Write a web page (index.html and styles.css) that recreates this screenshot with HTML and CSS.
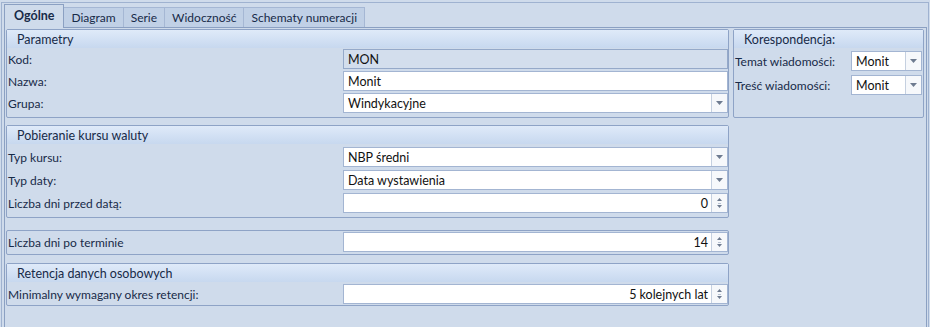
FILE: index.html
```html
<!DOCTYPE html>
<html lang="pl">
<head>
    <meta charset="UTF-8">
    <title>Monit</title>
    <link rel="stylesheet" href="styles.css">
</head>
<body>

    <div class="frame">

        <div class="tabs">
            <div class="tab active">Ogólne</div>
            <div class="tab">Diagram</div>
            <div class="tab">Serie</div>
            <div class="tab">Widoczność</div>
            <div class="tab">Schematy numeracji</div>
        </div>

        <div class="page">
            <div class="leftcol">

                <div class="group params">
                    <div class="groupheader">Parametry</div>
                    <div class="groupbody">
                        <div class="row">
                            <span class="label">Kod:</span>
                            <div class="field disabled">MON</div>
                        </div>
                        <div class="row">
                            <span class="label">Nazwa:</span>
                            <div class="field">Monit</div>
                        </div>
                        <div class="row">
                            <span class="label">Grupa:</span>
                            <div class="field combo">
                                <span class="value">Windykacyjne</span>
                                <span class="dropbtn"><svg width="7" height="4" viewBox="0 0 7 4"><polygon points="0,0 7,0 3.5,4" fill="#6e7b90"/></svg></span>
                            </div>
                        </div>
                    </div>
                </div>

                <div class="group rate">
                    <div class="groupheader">Pobieranie kursu waluty</div>
                    <div class="groupbody">
                        <div class="row">
                            <span class="label">Typ kursu:</span>
                            <div class="field combo">
                                <span class="value">NBP średni</span>
                                <span class="dropbtn"><svg width="7" height="4" viewBox="0 0 7 4"><polygon points="0,0 7,0 3.5,4" fill="#6e7b90"/></svg></span>
                            </div>
                        </div>
                        <div class="row">
                            <span class="label">Typ daty:</span>
                            <div class="field combo">
                                <span class="value">Data wystawienia</span>
                                <span class="dropbtn"><svg width="7" height="4" viewBox="0 0 7 4"><polygon points="0,0 7,0 3.5,4" fill="#6e7b90"/></svg></span>
                            </div>
                        </div>
                        <div class="row">
                            <span class="label">Liczba dni przed datą:</span>
                            <div class="field spin">
                                <span class="value">0</span>
                                <span class="spinbtn"><svg width="7" height="12" viewBox="0 0 7 12"><polygon points="1,4 6,4 3.5,1" fill="#6e7b90"/><rect x="2" y="6" width="3" height="1" fill="#b7c2d3"/><polygon points="1,8 6,8 3.5,11" fill="#6e7b90"/></svg></span>
                            </div>
                        </div>
                    </div>
                </div>

                <div class="group days">
                    <div class="groupbody">
                        <div class="row">
                            <span class="label">Liczba dni po terminie</span>
                            <div class="field spin">
                                <span class="value">14</span>
                                <span class="spinbtn"><svg width="7" height="12" viewBox="0 0 7 12"><polygon points="1,4 6,4 3.5,1" fill="#6e7b90"/><rect x="2" y="6" width="3" height="1" fill="#b7c2d3"/><polygon points="1,8 6,8 3.5,11" fill="#6e7b90"/></svg></span>
                            </div>
                        </div>
                    </div>
                </div>

                <div class="group retention">
                    <div class="groupheader">Retencja danych osobowych</div>
                    <div class="groupbody">
                        <div class="row">
                            <span class="label">Minimalny wymagany okres retencji:</span>
                            <div class="field spin">
                                <span class="value">5 kolejnych lat</span>
                                <span class="spinbtn"><svg width="7" height="12" viewBox="0 0 7 12"><polygon points="1,4 6,4 3.5,1" fill="#6e7b90"/><rect x="2" y="6" width="3" height="1" fill="#b7c2d3"/><polygon points="1,8 6,8 3.5,11" fill="#6e7b90"/></svg></span>
                            </div>
                        </div>
                    </div>
                </div>

            </div>

            <div class="rightcol">
                <div class="group mail">
                    <div class="groupheader">Korespondencja:</div>
                    <div class="groupbody">
                        <div class="row">
                            <span class="label">Temat wiadomości:</span>
                            <div class="field combo">
                                <span class="value">Monit</span>
                                <span class="dropbtn"><svg width="7" height="4" viewBox="0 0 7 4"><polygon points="0,0 7,0 3.5,4" fill="#6e7b90"/></svg></span>
                            </div>
                        </div>
                        <div class="row">
                            <span class="label">Treść wiadomości:</span>
                            <div class="field combo">
                                <span class="value">Monit</span>
                                <span class="dropbtn"><svg width="7" height="4" viewBox="0 0 7 4"><polygon points="0,0 7,0 3.5,4" fill="#6e7b90"/></svg></span>
                            </div>
                        </div>
                    </div>
                </div>
            </div>
        </div>

    </div>

</body>
</html>
```

FILE: styles.css
```css
* {
    box-sizing: border-box;
    margin: 0;
    padding: 0;
}

body {
    width: 930px;
    height: 327px;
    overflow: hidden;
    background-color: #cfdbeb;
    font-family: "Lato", "Open Sans", sans-serif;
    font-size: 12px;
    color: #172a48;
}

.frame {
    height: 325px;
    margin: 2px 1px 0 1px;
    border: 1px solid #9fb2d0;
    border-bottom: none;
    padding: 1px 1px 0 2px;
    display: flex;
    flex-direction: column;
}

/* tabs */

.tabs {
    display: flex;
    align-items: flex-end;
    height: 23px;
}

.tab {
    height: 20px;
    padding: 0 7px;
    display: flex;
    align-items: center;
    background-color: #c0d0e6;
    border: 1px solid #a5b7d4;
    border-bottom: none;
    margin-left: -1px;
    white-space: nowrap;
}

.tab.active {
    height: 24px;
    margin-left: 0;
    margin-bottom: -1px;
    padding: 0 9px 2px 9px;
    background-color: #cfdbeb;
    border-color: #8ba0c2;
    font-weight: 700;
    font-size: 12.5px;
    position: relative;
    z-index: 1;
}

.page {
    flex: 1;
    display: flex;
    gap: 4px;
    border: 1px solid #8ba0c2;
    border-bottom: none;
    padding: 1px 2px 0 1px;
}

.leftcol {
    width: 723px;
    display: flex;
    flex-direction: column;
}

.rightcol {
    flex: 1;
}

/* group boxes */

.group {
    border: 1px solid #8ea3c6;
    border-radius: 2px;
}

.groupheader {
    height: 18px;
    padding-left: 10px;
    display: flex;
    align-items: center;
    background: linear-gradient(#dfeaf9, #c7d8ef);
    font-size: 12.5px;
}

.groupbody {
    display: flex;
    flex-direction: column;
}

.params .groupbody {
    gap: 2px;
    padding: 1px 0 4px 0;
}

.rate {
    margin-top: 7px;
}

.rate .groupbody {
    gap: 3px;
    padding: 3px 0 4px 0;
}

.days {
    margin-top: 12px;
}

.days .groupbody {
    padding: 1px 0 2px 0;
}

.retention {
    margin-top: 8px;
}

.retention .groupbody {
    padding: 2px 0 1px 0;
}

.mail {
    height: 89px;
}

.mail .groupbody {
    gap: 4px;
    padding-top: 3px;
}

/* rows and fields */

.row {
    display: grid;
    grid-template-columns: 336px 1fr;
    align-items: center;
}

.mail .row {
    grid-template-columns: 117px 71px;
}

.label {
    padding-left: 1px;
    white-space: nowrap;
}

.field {
    height: 20px;
    display: flex;
    align-items: center;
    padding-left: 4px;
    background-color: #fff;
    border: 1px solid #a3b5d2;
    color: #111;
    font-size: 12.5px;
}

.field.disabled {
    background-color: #d3deed;
    border-color: #95a9c9;
}

.field.combo,
.field.spin {
    padding-left: 0;
}

.value {
    flex: 1;
    padding: 0 4px;
    white-space: nowrap;
}

.spin .value {
    text-align: right;
    padding-right: 3px;
}

.dropbtn,
.spinbtn {
    width: 16px;
    height: 100%;
    display: flex;
    align-items: center;
    justify-content: center;
    border-left: 1px solid #c5d0e0;
    background-color: #f6f8fb;
}
```
